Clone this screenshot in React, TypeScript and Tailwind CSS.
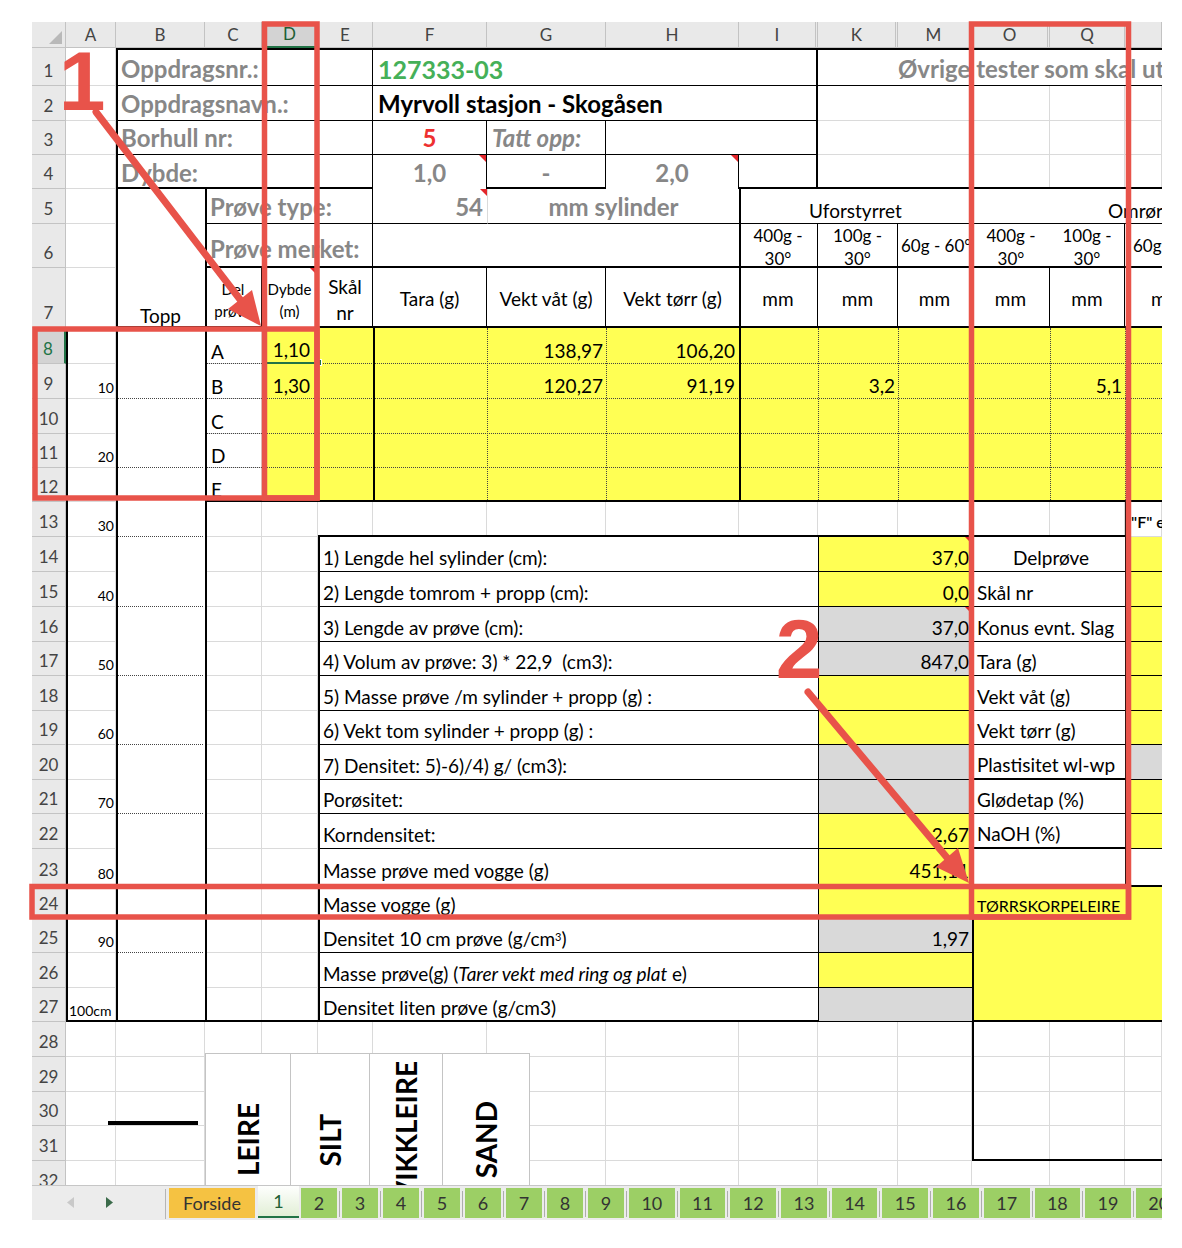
import React from 'react';

const COLS = ['A', 'B', 'C', 'D', 'E', 'F', 'G', 'H', 'I', 'K', 'M', 'O', 'Q', 'R'];
const HIDDEN_AFTER = ['I', 'K', 'M', 'O'];

const GRID =
  'grid grid-cols-[34px_50px_89px_57px_56px_55px_114px_119px_133px_79px_80px_74px_78px_75px_37px] grid-rows-[26px_38px_35px_34px_34px_35px_44px_60px_36px_35px_35px_34px_34px_35px_35px_35px_35px_34px_35px_34px_35px_34px_35px_36px_34px_34px_35px_34px_35px_35px_34px_35px_35px]';

const GB = 'text-[24px] leading-[28px] font-bold text-[#878787]';
const YEL = 'bg-[#ffff54]';
const GRA = 'bg-[#d9d9d9]';

interface CellProps {
  a: string;
  c?: string;
  children?: React.ReactNode;
}

const Cell: React.FC<CellProps> = ({ a, c = '', children }) => (
  <div className={`${a} flex min-w-0 ${c}`}>{children}</div>
);

const Note = () => (
  <span className="absolute right-0 top-0 h-0 w-0 border-l-[7px] border-t-[7px] border-l-transparent border-t-[#e3262b]" />
);

interface LowerRow {
  row: string;
  label: React.ReactNode;
  value?: string;
  vbg: string;
  note?: boolean;
  o?: string;
  oc?: string;
  ob?: string;
  r?: string;
}

const LOWER: LowerRow[] = [
  { row: 'row-start-15', label: '1) Lengde hel sylinder (cm):', value: '37,0', vbg: YEL, note: true, o: 'Delprøve', oc: 'justify-center', ob: 'border-b', r: YEL },
  { row: 'row-start-16', label: '2) Lengde tomrom + propp (cm):', value: '0,0', vbg: YEL, o: 'Skål nr', ob: 'border-b', r: YEL },
  { row: 'row-start-17', label: '3) Lengde av prøve (cm):', value: '37,0', vbg: GRA, note: true, o: 'Konus evnt. Slag', ob: 'border-b', r: YEL },
  { row: 'row-start-18', label: '4) Volum av prøve: 3) * 22,9  (cm3):', value: '847,0', vbg: GRA, o: 'Tara (g)', ob: 'border-b', r: YEL },
  { row: 'row-start-19', label: '5) Masse prøve /m sylinder + propp (g) :', vbg: YEL, o: 'Vekt våt (g)', ob: 'border-b', r: YEL },
  { row: 'row-start-20', label: '6) Vekt tom sylinder + propp (g) :', vbg: YEL, o: 'Vekt tørr (g)', ob: 'border-b', r: YEL },
  { row: 'row-start-21', label: '7) Densitet: 5)-6)/4) g/ (cm3):', vbg: GRA, o: 'Plastisitet wl-wp', ob: 'border-b-2', r: GRA },
  { row: 'row-start-22', label: 'Porøsitet:', vbg: GRA, o: 'Glødetap (%)', ob: 'border-b', r: YEL },
  { row: 'row-start-23', label: 'Korndensitet:', value: '2,67', vbg: YEL, o: 'NaOH (%)', ob: 'border-b-2', r: YEL },
  { row: 'row-start-24', label: 'Masse prøve med vogge (g)', value: '451,11', vbg: YEL, o: '', ob: 'border-b', r: 'bg-white' },
  { row: 'row-start-25', label: 'Masse vogge (g)', vbg: YEL },
  {
    row: 'row-start-26',
    label: (
      <span>
        Densitet 10 cm prøve (g/cm<sup className="text-[11px]">3</sup>)
      </span>
    ),
    value: '1,97',
    vbg: GRA,
  },
  {
    row: 'row-start-27',
    label: (
      <span>
        Masse prøve(g) (<i>Tarer vekt med ring og plat</i> e)
      </span>
    ),
    vbg: YEL,
  },
  { row: 'row-start-28', label: 'Densitet liten prøve (g/cm3)', vbg: GRA },
];

const DEPTHS = [
  { row: 'row-start-10', t: '10' },
  { row: 'row-start-12', t: '20' },
  { row: 'row-start-14', t: '30' },
  { row: 'row-start-16', t: '40' },
  { row: 'row-start-18', t: '50' },
  { row: 'row-start-20', t: '60' },
  { row: 'row-start-22', t: '70' },
  { row: 'row-start-24', t: '80' },
  { row: 'row-start-26', t: '90' },
];

const B_DOTS = ['row-start-10', 'row-start-12', 'row-start-14', 'row-start-16', 'row-start-18', 'row-start-20', 'row-start-22', 'row-start-24', 'row-start-26'];

const LETTERS = [
  { row: 'row-start-9', t: 'A' },
  { row: 'row-start-10', t: 'B' },
  { row: 'row-start-11', t: 'C' },
  { row: 'row-start-12', t: 'D' },
  { row: 'row-start-13', t: 'E' },
];

const DOT_ROWS = ['row-start-9', 'row-start-10', 'row-start-11', 'row-start-12'];
const DOT_COLS = ['col-start-8', 'col-start-9', 'col-start-11', 'col-start-12', 'col-start-13', 'col-start-14', 'col-start-15'];

const SHAPES = [
  { w: 'w-[86px]', t: 'LEIRE' },
  { w: 'w-[80px]', t: 'SILT' },
  { w: 'w-[74px]', t: 'KVIKKLEIRE' },
  { w: 'w-[88px]', t: 'SAND' },
];

const TABS = ['2', '3', '4', '5', '6', '7', '8', '9', '10', '11', '12', '13', '14', '15', '16', '17', '18', '19', '20'];

const BackgroundGrid = () => {
  const rows = Array.from({ length: 32 }, (_, i) => i + 1);
  return (
    <div className={`${GRID} col-start-1 row-start-1`}>
      <div className="flex items-end justify-end border-b border-r border-[#c3c3c3] bg-[#e9e9e9] pb-[3px] pr-[3px]">
        <div className="h-[13px] w-[13px] bg-[#b9b9b9] [clip-path:polygon(100%_0,100%_100%,0_100%)]" />
      </div>
      {COLS.map((col) => (
        <div
          key={col}
          className={`flex items-center justify-center text-[17px] ${
            col === 'D'
              ? 'border-b-2 border-r border-b-[#217346] border-r-[#c3c3c3] bg-[#d3d3d3] text-[#215f35]'
              : 'border-b border-r border-[#c3c3c3] bg-[#e9e9e9] text-[#444]'
          } ${HIDDEN_AFTER.includes(col) ? 'border-r-[3px] border-r-[#c3c3c3] [border-right-style:double]' : ''}`}
        >
          {col === 'R' ? '' : col}
        </div>
      ))}
      {rows.map((r) => (
        <React.Fragment key={r}>
          <div
            className={`flex items-end justify-center pb-[3px] text-[17px] ${
              r === 8
                ? 'border-b border-r-2 border-b-[#c3c3c3] border-r-[#217346] bg-[#d3d3d3] text-[#217346]'
                : 'border-b border-r border-[#c3c3c3] bg-[#e9e9e9] text-[#444]'
            }`}
          >
            {r}
          </div>
          {COLS.map((col) => (
            <div key={col} className="border-b border-r border-[#dadada]" />
          ))}
        </React.Fragment>
      ))}
    </div>
  );
};

const ContentGrid = () => (
  <div className={`${GRID} col-start-1 row-start-1`}>
    {/* Rad 1-4: oppdragsinfo */}
    <Cell a="col-start-3 col-end-7 row-start-2" c={`bg-white border-b border-r border-black items-end pl-[5px] pb-[2px] whitespace-nowrap ${GB}`}>Oppdragsnr.:</Cell>
    <Cell a="col-start-7 col-end-11 row-start-2" c="bg-white border-b border-black items-end pl-[5px] pb-[2px] text-[25px] leading-[28px] font-bold text-[#45b058]">127333-03</Cell>
    <Cell a="col-start-11 col-end-16 row-start-2" c={`bg-white border-b border-black items-end pl-[80px] pb-[2px] whitespace-nowrap overflow-hidden ${GB}`}>Øvrige tester som skal utføres</Cell>

    <Cell a="col-start-3 col-end-7 row-start-3" c={`bg-white border-b border-r border-black items-end pl-[5px] pb-[2px] whitespace-nowrap ${GB}`}>Oppdragsnavn.:</Cell>
    <Cell a="col-start-7 col-end-11 row-start-3" c="bg-white border-b border-black items-end pl-[5px] pb-[2px] text-[24px] leading-[28px] font-bold text-black whitespace-nowrap">Myrvoll stasjon - Skogåsen</Cell>
    <Cell a="col-start-11 col-end-13 row-start-3" c="bg-white border-b border-[#dadada]" />

    <Cell a="col-start-3 col-end-7 row-start-4" c={`bg-white border-b border-r border-black items-end pl-[5px] pb-[2px] whitespace-nowrap ${GB}`}>Borhull nr:</Cell>
    <Cell a="col-start-7 row-start-4" c="bg-white border-b border-r border-black items-end justify-center pb-[2px] text-[24px] leading-[28px] font-bold text-[#ee3030]">5</Cell>
    <Cell a="col-start-8 row-start-4" c={`bg-white border-b border-r border-black items-end pl-[5px] pb-[2px] italic whitespace-nowrap ${GB}`}>Tatt opp:</Cell>
    <Cell a="col-start-9 col-end-11 row-start-4" c="bg-white border-b border-black" />
    <Cell a="col-start-11 col-end-13 row-start-4" c="bg-white border-b border-[#dadada]" />

    <Cell a="col-start-3 col-end-7 row-start-5" c={`bg-white border-r border-black items-end pl-[5px] pb-[2px] ${GB}`}>Dybde:</Cell>
    <Cell a="col-start-7 row-start-5" c={`relative bg-white border-r border-black items-end justify-center pb-[2px] ${GB}`}>
      1,0
      <Note />
    </Cell>
    <Cell a="col-start-8 row-start-5" c={`bg-white border-r border-black items-end justify-center pb-[2px] ${GB}`}>-</Cell>
    <Cell a="col-start-9 row-start-5" c={`relative bg-white border-r border-black items-end justify-center pb-[2px] ${GB}`}>
      2,0
      <Note />
    </Cell>
    <Cell a="col-start-10 row-start-5" c="bg-white" />
    <Cell a="col-start-11 col-end-13 row-start-5" c="bg-white" />

    {/* Rad 5-7: prøveinfo og overskrifter */}
    <Cell a="col-start-3 row-start-6 row-end-9" c="bg-white items-end justify-center pb-[1px]">Topp</Cell>
    <Cell a="col-start-4 col-end-7 row-start-6" c={`bg-white border-b border-r border-black items-end pl-[5px] pb-[2px] whitespace-nowrap ${GB}`}>Prøve type:</Cell>
    <Cell a="col-start-7 row-start-6" c={`relative bg-white border-b border-black items-end justify-end pr-[4px] pb-[2px] ${GB}`}>
      54
      <Note />
    </Cell>
    <Cell a="col-start-8 col-end-10 row-start-6" c={`bg-white border-b border-l border-b-black border-l-[#dadada] items-end justify-center pb-[2px] ${GB}`}>mm sylinder</Cell>
    <Cell a="col-start-10 col-end-13 row-start-6" c="bg-white border-b border-black items-end justify-center pb-[1px]">Uforstyrret</Cell>
    <Cell a="col-start-13 col-end-16 row-start-6" c="bg-white border-b border-black items-end pl-[136px] pb-[1px] whitespace-nowrap overflow-hidden">Omrørt</Cell>

    <Cell a="col-start-4 col-end-7 row-start-7" c={`bg-white border-r border-black items-end pl-[5px] pb-[5px] whitespace-nowrap ${GB}`}>Prøve merket:</Cell>
    <Cell a="col-start-7 col-end-10 row-start-7" c="bg-white" />
    <Cell a="col-start-10 row-start-7" c="bg-white border-r border-black flex-col items-center justify-center text-[17px] leading-[23px] pt-[2px]">
      <span>400g -</span>
      <span>30°</span>
    </Cell>
    <Cell a="col-start-11 row-start-7" c="bg-white border-r border-black flex-col items-center justify-center text-[17px] leading-[23px] pt-[2px]">
      <span>100g -</span>
      <span>30°</span>
    </Cell>
    <Cell a="col-start-12 row-start-7" c="bg-white border-r border-black items-center pl-[3px] text-[17px] whitespace-nowrap">60g - 60°</Cell>
    <Cell a="col-start-13 row-start-7" c="bg-white flex-col items-center justify-center text-[17px] leading-[23px] pt-[2px]">
      <span>400g -</span>
      <span>30°</span>
    </Cell>
    <Cell a="col-start-14 row-start-7" c="bg-white border-r border-black flex-col items-center justify-center text-[17px] leading-[23px] pt-[2px]">
      <span>100g -</span>
      <span>30°</span>
    </Cell>
    <Cell a="col-start-15 row-start-7" c="bg-white items-center pl-[8px] text-[17px] whitespace-nowrap">60g</Cell>

    <Cell a="col-start-4 row-start-8" c="bg-white border-r border-black flex-col items-center justify-end pb-[6px] text-[15px] leading-[22px]">
      <span>Del</span>
      <span>prøve</span>
    </Cell>
    <Cell a="col-start-5 row-start-8" c="relative bg-white border-r border-black flex-col items-center justify-end pb-[6px] text-[15px] leading-[22px]">
      <span>Dybde</span>
      <span>(m)</span>
      <Note />
    </Cell>
    <Cell a="col-start-6 row-start-8" c="bg-white border-r border-black flex-col items-center justify-end pb-[2px] leading-[26px]">
      <span>Skål</span>
      <span>nr</span>
    </Cell>
    <Cell a="col-start-7 row-start-8" c="bg-white border-r border-black items-center justify-center pt-[2px] whitespace-nowrap">Tara (g)</Cell>
    <Cell a="col-start-8 row-start-8" c="bg-white border-r border-black items-center justify-center pt-[2px] whitespace-nowrap">Vekt våt (g)</Cell>
    <Cell a="col-start-9 row-start-8" c="bg-white items-center justify-center pt-[2px] whitespace-nowrap">Vekt tørr (g)</Cell>
    <Cell a="col-start-10 row-start-8" c="bg-white border-r border-black items-center justify-center pt-[2px]">mm</Cell>
    <Cell a="col-start-11 row-start-8" c="bg-white border-r border-black items-center justify-center pt-[2px]">mm</Cell>
    <Cell a="col-start-12 row-start-8" c="bg-white border-r border-black items-center justify-center pt-[2px]">mm</Cell>
    <Cell a="col-start-13 row-start-8" c="bg-white border-r border-black items-center justify-center pt-[2px]">mm</Cell>
    <Cell a="col-start-14 row-start-8" c="bg-white border-r border-black items-center justify-center pt-[2px]">mm</Cell>
    <Cell a="col-start-15 row-start-8" c="bg-white items-center pl-[26px] pt-[2px] whitespace-nowrap overflow-hidden">mm</Cell>

    {/* Rad 8-12: delprøver */}
    <Cell a="col-start-5 col-end-16 row-start-9 row-end-14" c={YEL} />
    <Cell a="col-start-3 row-start-9 row-end-29" c="bg-white" />
    {DOT_ROWS.map((r) => (
      <Cell key={r} a={`col-start-4 col-end-16 ${r}`} c="border-b border-dotted border-[#444]" />
    ))}
    {DOT_COLS.map((col) => (
      <Cell key={col} a={`${col} row-start-9 row-end-14`} c="border-l border-dotted border-[#444]" />
    ))}
    {B_DOTS.map((r) => (
      <Cell key={r} a={`col-start-3 ${r}`} c="mx-[2px] border-b border-dotted border-[#444]" />
    ))}
    {LETTERS.map((l) => (
      <Cell key={l.row} a={`col-start-4 ${l.row}`} c="items-end pl-[6px] pb-[1px]">{l.t}</Cell>
    ))}
    {DEPTHS.map((d) => (
      <Cell key={d.row} a={`col-start-2 ${d.row}`} c="items-end justify-end pr-[2px] pb-[3px] text-[14px] leading-[16px]">{d.t}</Cell>
    ))}
    <Cell a="col-start-2 row-start-28" c="items-end pl-[3px] pb-[3px] text-[14px] leading-[16px]">100cm</Cell>

    <Cell a="col-start-5 row-start-9" c="relative border-b-2 border-[#217346] items-end justify-end pr-[8px] pb-[1px]">
      1,10
      <span className="absolute -bottom-[4px] -right-[4px] h-[7px] w-[7px] border border-white bg-[#217346]" />
    </Cell>
    <Cell a="col-start-5 row-start-10" c="items-end justify-end pr-[8px] pb-[2px]">1,30</Cell>
    <Cell a="col-start-8 row-start-9" c="items-end justify-end pr-[3px] pb-[2px]">138,97</Cell>
    <Cell a="col-start-9 row-start-9" c="items-end justify-end pr-[4px] pb-[2px]">106,20</Cell>
    <Cell a="col-start-8 row-start-10" c="items-end justify-end pr-[3px] pb-[2px]">120,27</Cell>
    <Cell a="col-start-9 row-start-10" c="items-end justify-end pr-[4px] pb-[2px]">91,19</Cell>
    <Cell a="col-start-11 row-start-10" c="items-end justify-end pr-[3px] pb-[2px]">3,2</Cell>
    <Cell a="col-start-14 row-start-10" c="items-end justify-end pr-[3px] pb-[2px]">5,1</Cell>

    {/* Rad 13 */}
    <Cell a="col-start-15 row-start-14" c="border-l-2 border-black items-end pl-[4px] pb-[4px] text-[16px] font-semibold whitespace-nowrap overflow-hidden">"F" e</Cell>

    {/* Rad 14-27: beregninger */}
    {LOWER.map((l, i) => (
      <React.Fragment key={l.row}>
        <Cell a={`col-start-6 col-end-11 ${l.row}`} c="bg-white border-b border-black items-end pl-[5px] pb-[2px] whitespace-pre">{l.label}</Cell>
        <Cell a={`col-start-11 col-end-13 ${l.row}`} c={`relative ${l.vbg} border-l border-b border-black items-end justify-end pr-[3px] pb-[2px]`}>
          {l.value}
          {l.note && <Note />}
        </Cell>
        {l.o !== undefined && (
          <Cell a={`col-start-13 col-end-15 ${l.row}`} c={`bg-white border-l ${l.ob} border-black items-end pl-[4px] pb-[2px] whitespace-nowrap ${l.oc ?? ''}`}>{l.o}</Cell>
        )}
        {l.r && <Cell a={`col-start-15 ${l.row}`} c={`${l.r} ${i === 9 ? '' : 'border-b border-black'}`} />}
      </React.Fragment>
    ))}
    <Cell a="col-start-13 col-end-16 row-start-25 row-end-29" c={`${YEL} flex-col border-l-2 border-t-2 border-black`}>
      <div className="flex h-[32px] items-end pl-[3px] pb-[2px] text-[16px] whitespace-nowrap">TØRRSKORPELEIRE</div>
    </Cell>

    {/* Rammer */}
    <Cell a="col-start-3 col-end-11 row-start-2 row-end-6" c="border-2 border-black" />
    <Cell a="col-start-11 col-end-16 row-start-2 row-end-6" c="border-t-2 border-b-2 border-black" />
    <Cell a="col-start-3 row-start-2 row-end-29" c="border-l-2 border-black" />
    <Cell a="col-start-4 row-start-6 row-end-29" c="border-l-2 border-black" />
    <Cell a="col-start-10 row-start-6 row-end-14" c="border-l-2 border-black" />
    <Cell a="col-start-7 row-start-9 row-end-14" c="border-l-2 border-black" />
    <Cell a="col-start-5 row-start-9 row-end-14" c="border-l border-black" />
    <Cell a="col-start-4 col-end-16 row-start-7" c="border-b-2 border-black" />
    <Cell a="col-start-3 col-end-16 row-start-8" c="border-b-2 border-black" />
    <Cell a="col-start-4 col-end-16 row-start-13" c="border-b-2 border-black" />
    <Cell a="col-start-6 col-end-15 row-start-14" c="border-b-2 border-black" />
    <Cell a="col-start-6 row-start-15 row-end-29" c="border-l-2 border-black" />
    <Cell a="col-start-15 row-start-14 row-end-25" c="border-l-2 border-black" />
    <Cell a="col-start-2 row-start-9 row-end-29" c="border-l-2 border-black" />
    <Cell a="col-start-2 col-end-16 row-start-28" c="border-b-2 border-black" />
    <Cell a="col-start-13 col-end-16 row-start-29 row-end-33" c="border-l-2 border-b-2 border-black" />

    {/* Tegneobjekter under tabellen */}
    <Cell a="col-start-2 col-end-4 row-start-31" c="items-end">
      <div className="mb-[1px] ml-[42px] h-[4px] w-[90px] bg-black" />
    </Cell>
    <Cell a="col-start-4 col-end-9 row-start-29 row-end-34" c="items-start pt-[31px]">
      {SHAPES.map((s, i) => (
        <div key={s.t} className={`${s.w} ${i > 0 ? '-ml-px' : ''} flex h-[174px] shrink-0 items-center justify-center border border-[#c4c4c4] bg-white`}>
          <span className="rotate-180 text-[28px] font-bold leading-none whitespace-nowrap [writing-mode:vertical-rl]">{s.t}</span>
        </div>
      ))}
    </Cell>
  </div>
);

const TabBar = () => (
  <div className="flex h-[35px] w-[1130px] items-start overflow-hidden border-t border-[#c6c6c6] bg-[#ececec]">
    <div className="flex h-[33px] w-[133px] shrink-0 items-center">
      <svg className="ml-[35px] shrink-0" width="7" height="11" viewBox="0 0 7 11">
        <path d="M7 0 L0 5.5 L7 11 Z" fill="#c9c9c9" />
      </svg>
      <svg className="ml-[32px] shrink-0" width="7" height="11" viewBox="0 0 7 11">
        <path d="M0 0 L7 5.5 L0 11 Z" fill="#3b6b4a" />
      </svg>
    </div>
    <div className="mt-[3px] h-[30px] w-px shrink-0 bg-[#b5b5b5]" />
    <div className="ml-[3px] mt-[2px] flex h-[30px] w-[86px] shrink-0 items-center justify-center bg-[#f5c242] text-[18px] text-[#333]">Forside</div>
    <div className="ml-[3px] -mt-px flex h-[33px] w-[41px] shrink-0 items-center justify-center border-b-2 border-[#217346] bg-linear-to-b from-white to-[#e2efd6] text-[18px] text-[#215f35]">1</div>
    <div className="ml-[2px] flex shrink-0">
      {TABS.map((t, i) => (
        <React.Fragment key={t}>
          {i > 0 && (
            <div className="flex w-[5px] shrink-0 justify-center">
              <div className="mt-[5px] h-[26px] w-px bg-[#adadad]" />
            </div>
          )}
          <div
            className={`${t.length > 1 ? 'w-[45.7px]' : 'w-[36px]'} mt-[2px] flex h-[30px] shrink-0 items-center justify-center bg-[#9ccf65] text-[18px] text-[#333]`}
          >
            {t}
          </div>
        </React.Fragment>
      ))}
    </div>
  </div>
);

const Annotations = () => (
  <svg className="pointer-events-none absolute left-0 top-0" width={1182} height={1248}>
    <g fill="none" stroke="#e8534a" strokeWidth={5.5}>
      <rect x={264.5} y={24} width={52.5} height={474} />
      <rect x={35} y={329} width={282} height={169} />
      <rect x={971.5} y={24} width={157} height={893} />
      <rect x={32} y={886.5} width={1096.5} height={30.5} />
    </g>
    <g stroke="#e8534a" strokeWidth={7} strokeLinecap="round">
      <line x1={96} y1={112} x2={242} y2={302} />
      <line x1={808} y1={692} x2={949} y2={860} />
    </g>
    <g fill="#e8534a">
      <polygon points="261,326 228,309 252,290" />
      <polygon points="969,883 936,867 958,848" />
    </g>
    <g fill="#e8534a" fontFamily="'Liberation Sans', Arial, sans-serif" fontWeight={700} fontSize={84} textAnchor="middle">
      <text x={82} y={110}>1</text>
      <text x={799} y={678}>2</text>
    </g>
  </svg>
);

const App: React.FC = () => {
  return (
    <div className="relative h-[1248px] w-[1182px] overflow-hidden bg-white font-[Lato,sans-serif] text-[19px] leading-[22px] text-black">
      <div className="pl-[32px] pt-[22px]">
        <div className="grid h-[1163px] w-[1130px] grid-rows-[1163px] overflow-hidden">
          <BackgroundGrid />
          <ContentGrid />
        </div>
        <TabBar />
      </div>
      <Annotations />
    </div>
  );
};

export default App;
